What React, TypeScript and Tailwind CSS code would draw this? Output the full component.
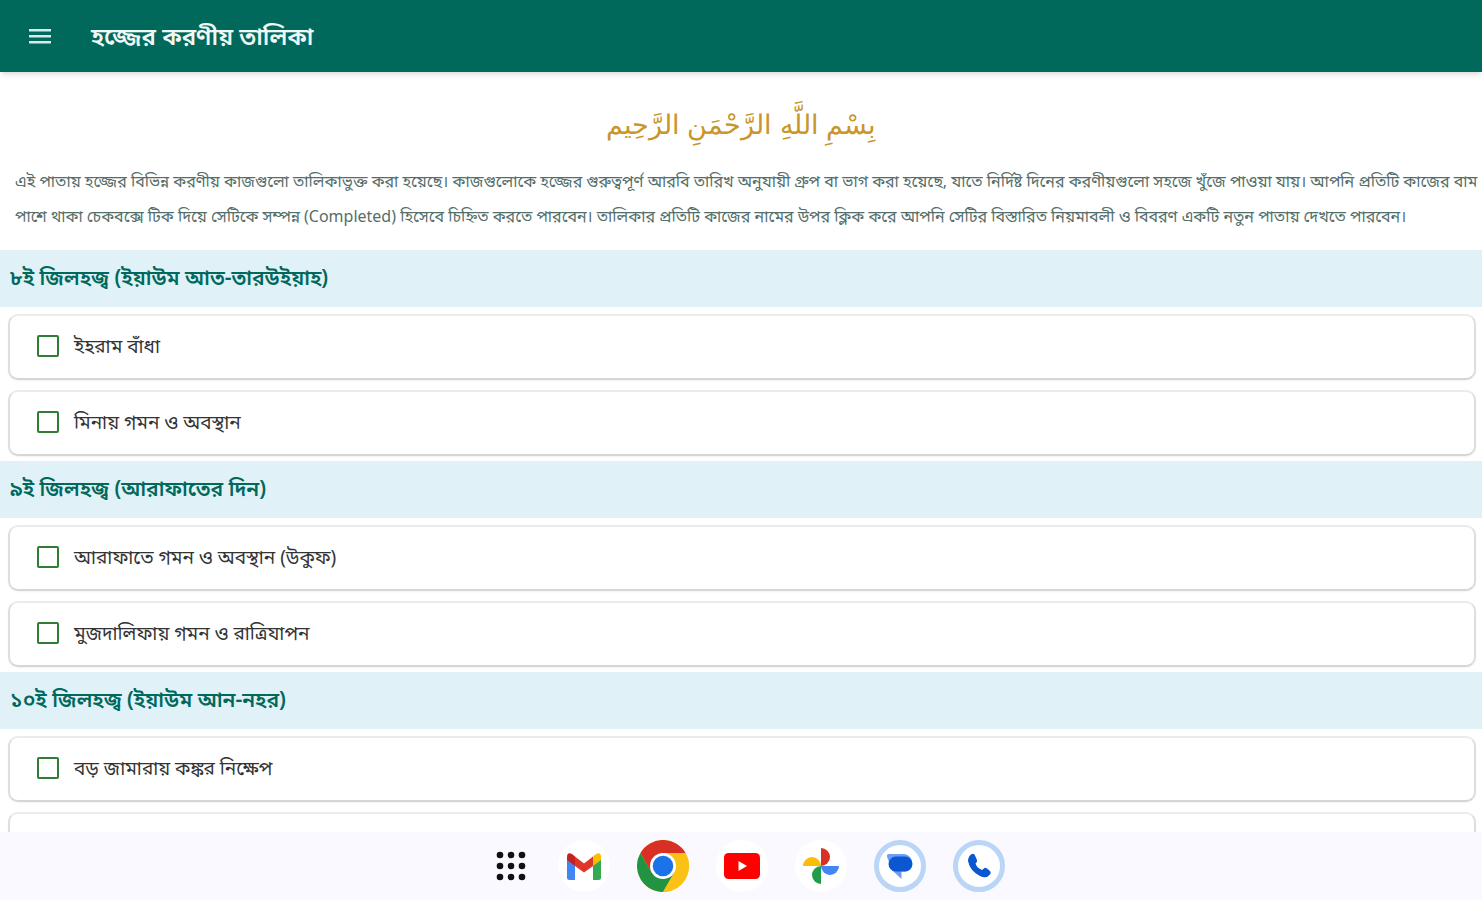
import type { ReactNode } from 'react';

const sections = [
  { title: '৮ই জিলহজ্ব (ইয়াউম আত-তারউইয়াহ)', tasks: ['ইহরাম বাঁধা', 'মিনায় গমন ও অবস্থান'] },
  { title: '৯ই জিলহজ্ব (আরাফাতের দিন)', tasks: ['আরাফাতে গমন ও অবস্থান (উকুফ)', 'মুজদালিফায় গমন ও রাত্রিযাপন'] },
  { title: '১০ই জিলহজ্ব (ইয়াউম আন-নহর)', tasks: ['বড় জামারায় কঙ্কর নিক্ষেপ', ''] },
];

function TaskCard({ label }: { label: string }) {
  return (
    <label className="flex h-[66px] items-center gap-[15px] rounded-[10px] border-2 border-t-[#ebebeb] border-x-[#dedede] border-b-[#d6d6d6] bg-white pb-0.5 pl-[27px] shadow-xs">
      <input
        type="checkbox"
        className="size-[22px] shrink-0 appearance-none rounded-xs border-2 border-[#2e7d32] checked:bg-[#2e7d32]"
      />
      <span className="text-[19px] leading-6 text-[#333]">{label}</span>
    </label>
  );
}

function DockApp({ label, className, children }: { label: string; className: string; children: ReactNode }) {
  return (
    <button aria-label={label} className={`flex size-[52px] items-center justify-center rounded-full ${className}`}>
      {children}
    </button>
  );
}

function Dock() {
  return (
    <nav className="flex h-[68px] shrink-0 items-center justify-center gap-[27px] bg-[#f9f9ff] pl-[14px]">
      <button aria-label="All apps" className="flex size-10 items-center justify-center">
        <svg viewBox="0 0 32 32" className="size-8" fill="#111">
          {[5, 16, 27].map((y) => [5, 16, 27].map((x) => <circle key={`${x}-${y}`} cx={x} cy={y} r="3.3" />))}
        </svg>
      </button>
      <DockApp label="Gmail" className="bg-white">
        <svg viewBox="0 0 34 27" className="w-[34px]">
          <path d="M0 5v19.500Q0 27 2.500 27H8V11Z" fill="#4285f4" />
          <path d="M34 5v19.500Q34 27 31.500 27H26V11Z" fill="#34a853" />
          <path d="M26 3.500 29 1q5-2.500 5 3v3l-8 6Z" fill="#fbbc04" />
          <path d="M8 3.500 17 10.500 26 3.500V13l-9 6.500L8 13Z" fill="#e0362a" />
          <path d="M0 7V4q0-5.500 5-3l3 2.500V13Z" fill="#c5221f" />
        </svg>
      </DockApp>
      <DockApp label="Chrome" className="bg-white">
        <svg viewBox="0 0 48 48" className="size-[52px]">
          <circle cx="24" cy="24" r="24" fill="#fbc116" />
          <path d="M24 24 13.600 30 3.200 12A24 24 0 0 0 24 48L34.400 30Z" fill="#229342" />
          <path d="M24 12H44.800A24 24 0 0 0 3.200 12L13.600 30 24 24Z" fill="#d93025" />
          <path d="M24 12H44.800A24 24 0 0 1 24 48L34.400 30Z" fill="#fbc116" />
          <circle cx="24" cy="24" r="12" fill="#fff" />
          <circle cx="24" cy="24" r="9.500" fill="#1a73e8" />
        </svg>
      </DockApp>
      <DockApp label="YouTube" className="bg-white">
        <svg viewBox="0 0 36 26" className="w-9">
          <rect width="36" height="26" rx="4.500" fill="#f00" />
          <path d="M14.500 8v10L23 13Z" fill="#fff" />
        </svg>
      </DockApp>
      <DockApp label="Photos" className="bg-white">
        <svg viewBox="0 0 38 38" className="size-[38px]">
          <path d="M19 19V1a9 9 0 0 1 0 18" fill="#d93025" />
          <path d="M19 19h18a9 9 0 0 1-18 0" fill="#4285f4" />
          <path d="M19 19v18a9 9 0 0 1 0-18" fill="#1e9e4a" />
          <path d="M19 19H1a9 9 0 0 1 18 0" fill="#fbbc04" />
        </svg>
      </DockApp>
      <DockApp label="Messages" className="border-[5px] border-[#bad5f5] bg-white">
        <svg viewBox="0 0 28 28" className="size-7">
          <path d="M3 2h15a9 9 0 0 1 2 17.500h-4.500V27L8 20Q3 17 3 10L1 4.500Q.5 2 3 2Z" fill="#6c9df8" />
          <path d="M10 4.500h9a7.500 7.500 0 0 1 0 15h-9a7.500 7.500 0 0 1 0-15Z" fill="#0b57d0" />
        </svg>
      </DockApp>
      <DockApp label="Phone" className="border-[5px] border-[#bad5f5] bg-white">
        <svg viewBox="0 0 28 28" className="size-7">
          <path
            d="M6 2.500Q8 1 9.500 2.500L12 8Q12.500 10 10.500 11.500Q12 16 17 18L19.500 16Q20.500 15.500 22 16.500L25 19Q26.500 20.500 25 22.500Q21.500 27 15 24Q5 19 3 9Q3 5 6 2.500Z"
            fill="#0b57d0"
          />
        </svg>
      </DockApp>
    </nav>
  );
}

export default function App() {
  return (
    <div className="flex h-screen flex-col overflow-hidden bg-white font-['Noto_Sans','Noto_Sans_Bengali',sans-serif]">
      <header className="z-10 flex h-[72px] shrink-0 items-center gap-10 bg-[#00695c] pl-[29px] shadow-md">
        <button aria-label="Menu" className="flex h-8 items-center">
          <svg viewBox="0 0 22 16" className="w-[22px]" fill="#d5ebe7">
            <path d="M0 1h22v2.500H0zM0 7h22v2.500H0zM0 13h22v2.500H0z" />
          </svg>
        </button>
        <h1 className="text-2xl font-semibold text-[#f0f8f6]">হজ্জের করণীয় তালিকা</h1>
      </header>
      <main className="min-h-0 flex-1 overflow-hidden">
        <p dir="rtl" lang="ar" className="pt-7 text-center text-[27px] leading-[48px] text-[#c8962a]">
          بِسْمِ اللَّهِ الرَّحْمَنِ الرَّحِيم
        </p>
        <p className="py-4 pl-[15px] text-base leading-[35px] text-[#546e6a]">
          এই পাতায় হজ্জের বিভিন্ন করণীয় কাজগুলো তালিকাভুক্ত করা হয়েছে। কাজগুলোকে হজ্জের গুরুত্বপূর্ণ আরবি তারিখ
          অনুযায়ী গ্রুপ বা ভাগ করা হয়েছে, যাতে নির্দিষ্ট দিনের করণীয়গুলো সহজে খুঁজে পাওয়া যায়। আপনি প্রতিটি
          কাজের বাম পাশে থাকা চেকবক্সে টিক দিয়ে সেটিকে সম্পন্ন (Completed) হিসেবে চিহ্নিত করতে পারবেন। তালিকার
          প্রতিটি কাজের নামের উপর ক্লিক করে আপনি সেটির বিস্তারিত নিয়মাবলী ও বিবরণ একটি নতুন পাতায় দেখতে পারবেন।
        </p>
        {sections.map((section) => (
          <section key={section.title}>
            <h2 className="h-[57px] bg-[#e0f1f8] px-[10px] text-[21px] leading-[54px] font-semibold text-[#00695c]">
              {section.title}
            </h2>
            <div className="flex flex-col gap-[10px] pt-[7px] pr-1.5 pb-[5px] pl-2">
              {section.tasks.map((task) => (
                <TaskCard key={task} label={task} />
              ))}
            </div>
          </section>
        ))}
      </main>
      <Dock />
    </div>
  );
}
